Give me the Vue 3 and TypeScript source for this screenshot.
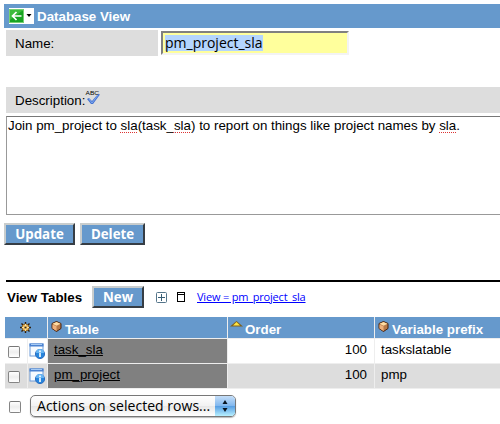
<script setup lang="ts">
import { ref } from 'vue'

interface ViewTable {
  table: string
  order: number
  prefix: string
}

const name = ref('pm_project_sla')
const rows: ViewTable[] = [
  { table: 'task_sla', order: 100, prefix: 'taskslatable' },
  { table: 'pm_project', order: 100, prefix: 'pmp' },
]
</script>

<template>
  <main class="page">
    <header class="titlebar">
      <span class="back">
        <svg width="25" height="16" viewBox="0 0 25 16">
          <rect width="25" height="16" fill="#fff" />
          <rect x="0.5" y="1.5" width="14" height="13" fill="#3dbb3c" stroke="#75cf72" />
          <path d="M1 14V12L13 3h1v11z" fill="#18a322" />
          <path d="M12.5 8H4M7.5 4l-4 4 4 4" fill="none" stroke="#fff" stroke-width="1.7" />
          <path d="M17.5 6h5L20 9z" fill="#000" />
        </svg>
      </span>
      <h1>Database View</h1>
    </header>

    <div class="field">
      <label class="label">Name:</label>
      <div class="input"><span class="selected">{{ name }}</span></div>
    </div>

    <div class="description">
      <span class="caption">Description:</span>
      <svg class="spell" width="17" height="17" viewBox="0 0 17 17">
        <text x="0.5" y="6" textLength="13.5" lengthAdjust="spacingAndGlyphs" class="abc">ABC</text>
        <path d="M2 10l2-1 3 3 6-7 2 .5L8 15H6z" fill="#4473d2" />
        <path d="M4 10l3 4 6-8" fill="none" stroke="#82a9ee" />
      </svg>
    </div>
    <div class="textarea">Join pm_project to <u>sla</u>(task_<u>sla</u>) to report on things like project names by <u>sla</u>.</div>

    <div class="buttons">
      <button class="btn update">Update</button>
      <button class="btn delete">Delete</button>
    </div>

    <section class="related">
      <h2>View Tables</h2>
      <button class="btn new">New</button>
      <svg class="plus" width="11" height="11" viewBox="0 0 11 11">
        <rect x="0.5" y="0.5" width="10" height="10" rx="1" fill="#fff" stroke="#54758a" />
        <path d="M2 5.5h7M5.5 2v7" stroke="#365d74" />
      </svg>
      <svg class="window" width="8" height="10" viewBox="0 0 8 10">
        <rect x="0.5" y="0.5" width="7" height="9" fill="#fff" stroke="#000" />
        <path d="M0 2.5h8" stroke="#000" />
      </svg>
      <a class="viewlink">View = pm_project_sla</a>
    </section>

    <div class="grid">
      <div class="head gearcell">
        <svg width="11" height="11" viewBox="0 0 11 11">
          <path d="M5.5 0v11M0 5.5h11M1.5 1.5l8 8M9.5 1.5l-8 8" stroke="#2d1c08" stroke-width="1.4" />
          <circle cx="5.5" cy="5.5" r="3.5" fill="#f0bd5c" stroke="#7b5522" stroke-width=".8" />
          <path d="M5.5 2v7M2 5.5h7" stroke="#ffe39a" />
          <circle cx="5.5" cy="5.5" r="1.1" fill="#38230d" />
        </svg>
      </div>
      <div class="head tablecell">
        <svg class="cube" width="11" height="11" viewBox="0 0 11 11">
          <path d="M5.5.5l4.5 2v5l-4.5 3L1 7.5v-5z" fill="#b87a48" stroke="#49230d" />
          <path d="M1.5 2.8l4-1.8 4 1.8-4 2z" fill="#ffdda3" />
          <path d="M1.5 3.5l4 1.8V10l-4-2.6z" fill="#eeb17c" />
        </svg>
        <span>Table</span>
      </div>
      <div class="head ordercell">
        <svg class="sort" width="13" height="6" viewBox="0 0 13 6">
          <path d="M0 5.5L6.5 0 13 5.5z" fill="#80611c" />
          <path d="M3 4.5L6.5 1 10 4.5z" fill="#ffe543" />
        </svg>
        <span>Order</span>
      </div>
      <div class="head prefixcell">
        <svg class="cube" width="11" height="11" viewBox="0 0 11 11">
          <path d="M5.5.5l4.5 2v5l-4.5 3L1 7.5v-5z" fill="#b87a48" stroke="#49230d" />
          <path d="M1.5 2.8l4-1.8 4 1.8-4 2z" fill="#ffdda3" />
          <path d="M1.5 3.5l4 1.8V10l-4-2.6z" fill="#eeb17c" />
        </svg>
        <span>Variable prefix</span>
      </div>
      <template v-for="(row, i) in rows" :key="row.table">
        <div class="cell checkcell" :class="{ odd: i % 2 }"><span class="check"></span></div>
        <div class="cell infocell" :class="{ odd: i % 2 }">
          <svg width="17" height="17" viewBox="0 0 17 17">
            <rect x="1" y="1" width="13" height="12" fill="#f7fbff" stroke="#6b9ad8" />
            <path d="M.5 2h14" stroke="#4b82d1" stroke-width="3" />
            <path d="M2 1.5h11" stroke="#a6cbf5" />
            <circle cx="11" cy="11" r="4.6" fill="#2785dc" stroke="#2f6fc0" />
            <path d="M7 10a4 4 0 0 1 8 0z" fill="#68b6f4" />
            <path d="M11 7.6v1.6M11 10v4" fill="none" stroke="#fff" stroke-width="1.6" />
          </svg>
        </div>
        <div class="cell dark"><a>{{ row.table }}</a></div>
        <div class="cell number" :class="{ odd: i % 2 }">{{ row.order }}</div>
        <div class="cell prefix" :class="{ odd: i % 2 }">{{ row.prefix }}</div>
      </template>
    </div>

    <footer class="actions">
      <span class="check"></span>
      <div class="select">
        <span class="choice">Actions on selected rows...</span>
        <span class="stepper">
          <svg width="6" height="14" viewBox="0 0 6 14">
            <path d="M0.5 5L3 1l2.5 4zM.5 9h5L3 13z" fill="#0a1520" />
          </svg>
        </span>
      </div>
    </footer>
  </main>
</template>

<style>
body {
  background: #fff;
  overflow: hidden;
}
</style>

<style scoped>
* {
  box-sizing: border-box;
}
svg {
  display: block;
  flex: none;
}
.page {
  width: 500px;
  height: 424px;
  padding: 4px 0 0 4px;
  overflow: hidden;
  color: #000;
  font: 13.33px/16px "Liberation Sans", Arial, sans-serif;
  white-space: nowrap;
}
.titlebar {
  display: flex;
  height: 24px;
  padding: 4px 0 0 5px;
  background: #69c;
}
h1 {
  margin: 0 0 0 3px;
  color: #fff;
  font-size: 13.33px;
  line-height: 17px;
}
.field {
  display: flex;
  height: 26px;
  margin: 2px 0 0 2px;
}
.label {
  width: 152px;
  padding: 6px 0 0 9px;
  background: #ddd;
}
.input {
  width: 188px;
  height: 24px;
  margin: 1px 0 0 3px;
  padding: 2px 0 0 2px;
  border: 2px solid #808080;
  border-right-color: #f3f3f3;
  border-bottom-color: #f3f3f3;
  background: #ffff9c;
  font: 14px/16px "Open Sans", sans-serif;
}
.selected {
  display: block;
  width: 98px;
  background: #b4d5fe;
}
.description {
  display: flex;
  height: 26px;
  margin: 31px 0 0 2px;
  padding: 6px 0 0 9px;
  background: #ddd;
}
.caption {
  width: 70px;
}
.spell {
  margin-top: -4px;
}
.abc {
  font-size: 6px;
}
.textarea {
  height: 99px;
  margin: 3px 0 0 2px;
  padding: 1px 0 0 1px;
  border: 1px solid #999;
  border-top-color: #777;
  border-right: 0;
}
.textarea u {
  text-decoration: underline dotted #d33 1px;
  text-underline-offset: 2px;
}
.buttons {
  display: flex;
  gap: 5px;
  margin-top: 8px;
}
.btn {
  flex: none;
  height: 22px;
  padding: 0;
  border: 2px solid #c9cdcd;
  border-right-color: #363d44;
  border-bottom-color: #363d44;
  background: #69c;
  color: #fff;
  font: bold 13.3px/17px "Open Sans", sans-serif;
}
.update {
  width: 71px;
}
.delete {
  width: 65px;
}
.related {
  display: flex;
  height: 37px;
  margin: 35px 0 0 2px;
  padding-top: 4px;
  border-top: 2px solid #000;
}
h2 {
  width: 85px;
  margin: 3px 0 0;
  padding-left: 1px;
  font-size: 13.33px;
  line-height: 17px;
}
.new {
  width: 52px;
  margin-left: 1px;
}
.plus {
  margin: 6px 0 0 12px;
}
.window {
  margin: 6px 0 0 10px;
}
.viewlink {
  margin: 3px 0 0 12px;
  color: #00f;
  font: 11px/16px "Open Sans", sans-serif;
  letter-spacing: -0.2px;
  text-decoration: underline;
}
.grid {
  display: grid;
  grid-template-columns: 22px 19px 179px 146px 125px;
  grid-template-rows: 21px 24px 24px;
  gap: 1px;
  width: 495px;
  margin-left: 1px;
  border-bottom: 1px solid #eee;
  background: #eee;
}
.head {
  display: flex;
  background: #69c;
  color: #fff;
  font-weight: bold;
  line-height: 25px;
}
.gearcell {
  grid-column: span 2;
  padding: 5px 0 0 15px;
}
.tablecell {
  padding-left: 3px;
}
.cube {
  margin: 4px 3px 0 0;
}
.ordercell {
  padding-left: 2px;
}
.sort {
  margin: 4px 2px 0 0;
}
.prefixcell {
  padding-left: 3px;
}
.cell {
  background: #fff;
  line-height: 22px;
}
.odd {
  background: #ddd;
}
.checkcell {
  padding: 7px 0 0 3px;
}
.check {
  display: block;
  flex: none;
  width: 12px;
  height: 12px;
  border: 1px solid #858585;
  border-top-color: #777;
  border-radius: 2px;
  background: linear-gradient(#fff, #eee 50%, #fff);
}
.infocell {
  padding: 4px 0 0 1px;
}
.dark {
  padding-left: 6px;
  background: #808080;
}
.dark a {
  text-decoration: underline;
}
.number {
  padding-right: 7px;
  text-align: right;
}
.prefix {
  padding-left: 6px;
}
.actions {
  display: flex;
  margin: 6px 0 0 5px;
}
.actions .check {
  margin-top: 6px;
}
.select {
  display: flex;
  width: 206px;
  height: 22px;
  margin-left: 9px;
  border: 1px solid #777;
  border-radius: 5px;
  background: linear-gradient(#fff, #f2f2f2 50%, #e7e7e7 52%, #fff);
  box-shadow: 0 1px 1px #bbb;
  font: 14px/20px "Open Sans", sans-serif;
  overflow: hidden;
}
.choice {
  width: 184px;
  padding-left: 6px;
  letter-spacing: 0.03px;
}
.stepper {
  width: 20px;
  padding: 3px 0 0 7px;
  background: linear-gradient(#c5def8, #82b8ee 48%, #589fe3 52%, #b8f0ff);
}
</style>
